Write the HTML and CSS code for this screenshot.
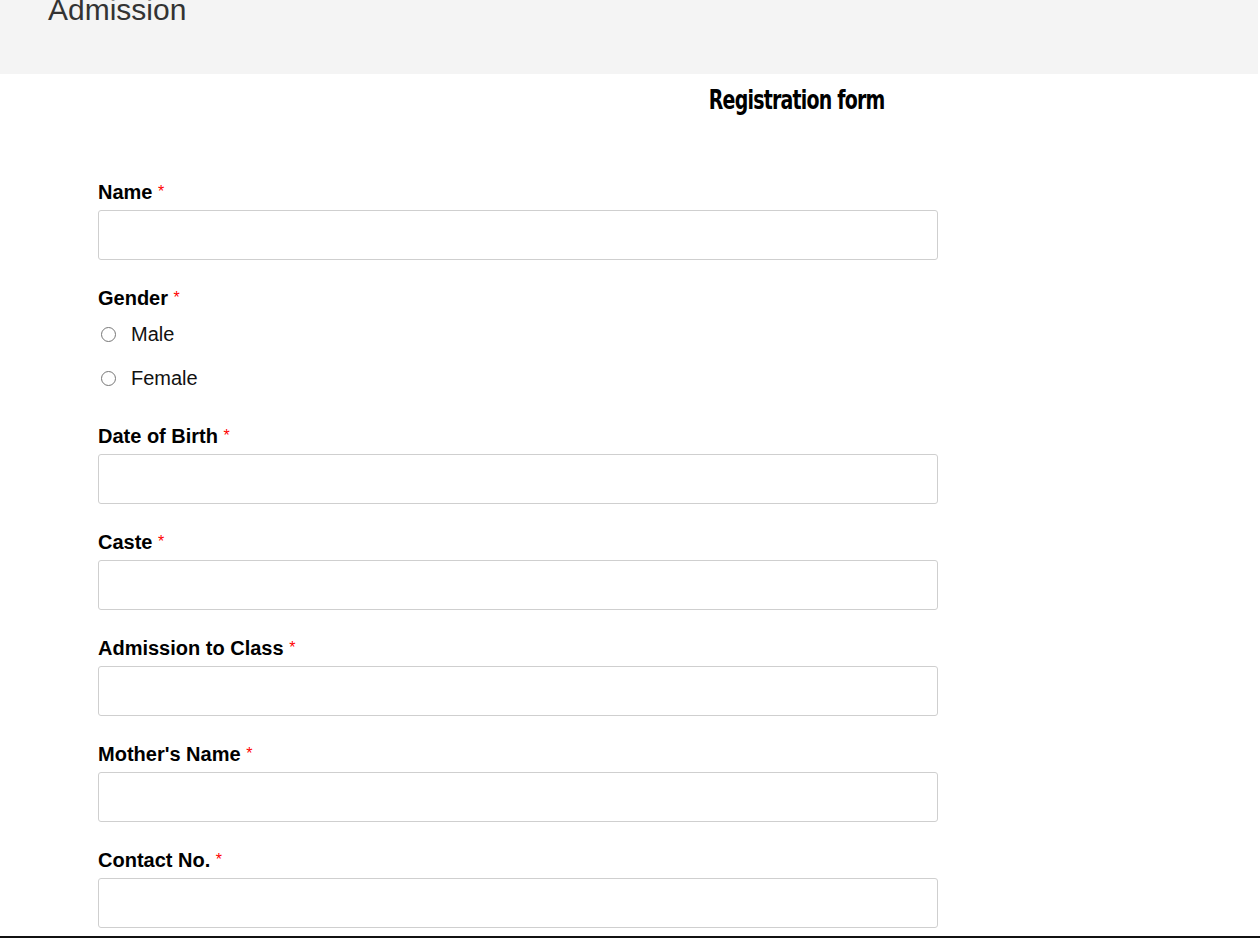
FILE: index.html
```html
<!DOCTYPE html>
<html lang="en">
<head>
<meta charset="utf-8">
<title>Admission</title>
<link rel="stylesheet" href="styles.css">
</head>
<body>
<header class="page-header">
  <h1 class="page-title">Admission</h1>
</header>
<main class="content">
  <div class="form-title-wrap">
    <h2 class="form-title">Registration form</h2>
  </div>
  <form class="reg-form">
    <div class="field">
      <label class="field-label">Name <span class="req">*</span></label>
      <input class="text-input" type="text">
    </div>
    <div class="field field-radio">
      <label class="field-label">Gender <span class="req">*</span></label>
      <label class="radio-row"><input type="radio" name="gender"><span>Male</span></label>
      <label class="radio-row"><input type="radio" name="gender"><span>Female</span></label>
    </div>
    <div class="field">
      <label class="field-label">Date of Birth <span class="req">*</span></label>
      <input class="text-input" type="text">
    </div>
    <div class="field">
      <label class="field-label">Caste <span class="req">*</span></label>
      <input class="text-input" type="text">
    </div>
    <div class="field">
      <label class="field-label">Admission to Class <span class="req">*</span></label>
      <input class="text-input" type="text">
    </div>
    <div class="field">
      <label class="field-label">Mother's Name <span class="req">*</span></label>
      <input class="text-input" type="text">
    </div>
    <div class="field">
      <label class="field-label">Contact No. <span class="req">*</span></label>
      <input class="text-input" type="text">
    </div>
  </form>
</main>
<div class="bottom-rule"></div>
</body>
</html>
```
FILE: styles.css
```css
html, body {
  margin: 0;
  padding: 0;
  background: #fff;
  font-family: "Liberation Sans", Arial, sans-serif;
  color: #000;
}

.page-header {
  background: #f4f4f4;
  height: 74px;
  margin-right: 2px;
  overflow: hidden;
}

.page-title {
  margin: -5px 0 0 0;
  padding-left: 48px;
  font-weight: normal;
  font-size: 30px;
  line-height: 30px;
  color: #333;
}

.content {
  padding-top: 10px;
}

.form-title-wrap {
  margin-left: 334px;
  display: flex;
  justify-content: center;
}

.form-title {
  margin: 0;
  font-family: "DejaVu Sans Condensed", "DejaVu Sans", sans-serif;
  font-stretch: condensed;
  font-weight: bold;
  font-size: 27px;
  letter-spacing: -1px;
  line-height: 32px;
  color: #000;
  transform: scaleX(0.78);
  white-space: nowrap;
}

.reg-form {
  margin: 64px 0 0 98px;
  width: 840px;
}

.field {
  margin-bottom: 26px;
}

.field-label {
  display: block;
  font-weight: bold;
  font-size: 20px;
  line-height: 24px;
  margin-bottom: 6px;
}

.req {
  color: #f00;
  font-weight: normal;
  font-size: 16px;
  line-height: 0;
  vertical-align: 2px;
}

.text-input {
  display: block;
  box-sizing: border-box;
  width: 840px;
  height: 50px;
  border: 1px solid #cfcfcf;
  border-radius: 3px;
  background: #fff;
  margin: 0;
  padding: 0 10px;
}

.field-radio {
  margin-bottom: 24px;
}

.field-radio .field-label {
  margin-bottom: 2px;
}

.radio-row {
  display: flex;
  align-items: center;
  height: 44px;
  font-size: 20px;
  color: #111;
}

.radio-row input {
  margin: 0 15px 0 3px;
  width: 15px;
  height: 15px;
}

.bottom-rule {
  position: fixed;
  left: 0;
  right: 0;
  bottom: 0;
  height: 2px;
  background: #111;
}
```
